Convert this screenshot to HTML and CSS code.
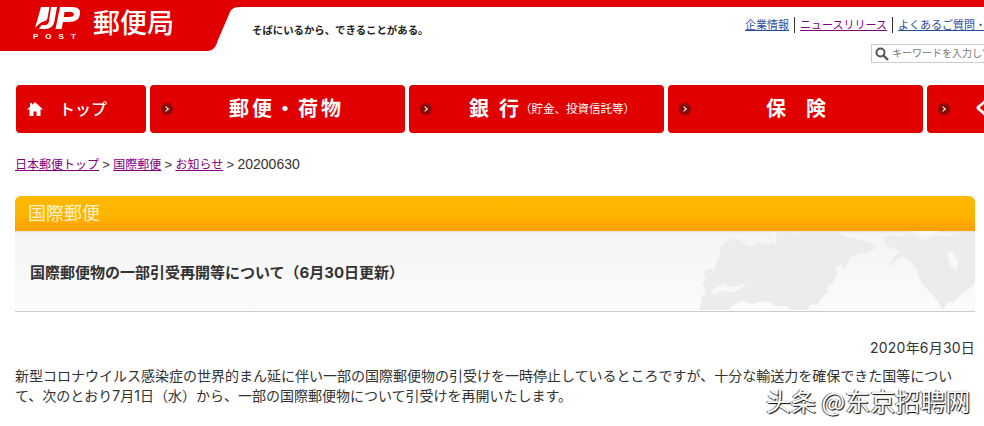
FILE: index.html
```html
<!DOCTYPE html>
<html lang="ja">
<head>
    <meta charset="UTF-8">
    <meta name="viewport" content="width=device-width, initial-scale=1.0">
    <title>国際郵便 お知らせ 20200630</title>
    <link rel="stylesheet" href="styles.css">
</head>
<body>
    <header class="header">
        <div class="brand">
            <div class="logo">
                <svg class="logo-mark" width="46" height="25" viewBox="0 0 46 25">
                    <path fill="#fff" d="M6 0H14.500L12.500 11Q12 14 8.500 14.500Q6 15 4 17L0 21Z"/>
                    <path fill="#fff" d="M16 0H22L19.500 14Q18 22 10 22H4L6.500 18H10Q13.500 18 14 14Z"/>
                    <path fill="#fff" fill-rule="evenodd" d="M25 0H37Q46 0 45 7Q44 15 34 15H28L26.500 22H20.500ZM29.500 5L28.800 10H34Q38.500 10 39 7.500Q39 5 35.500 5Z"/>
                </svg>
                <span class="logo-post">POST</span>
            </div>
            <span class="brand-name">郵便局</span>
        </div>
        <p class="tagline">そばにいるから、できることがある。</p>
        <div class="utility">
            <ul class="utility-links">
                <li><a href="#">企業情報</a></li>
                <li><a href="#" class="visited">ニュースリリース</a></li>
                <li><a href="#">よくあるご質問・お問い合わせ</a></li>
            </ul>
            <div class="search">
                <svg width="14" height="14" viewBox="0 0 14 14">
                    <circle cx="5.500" cy="5.500" r="4" fill="none" stroke="#555" stroke-width="2"/>
                    <path d="M8.500 8.500L13 13" stroke="#555" stroke-width="2.400"/>
                </svg>
                <span>キーワードを入力してください</span>
            </div>
        </div>
    </header>

    <nav class="nav">
        <a href="#" class="nav-item nav-home">
            <svg width="16" height="14" viewBox="0 0 16 14">
                <path fill="#fff" d="M8 0L16 7.500H13.500V14H9.500V9.500H6.500V14H2.500V7.500H0L3 4.700V1H5V2.800Z"/>
            </svg>
            <span class="nav-top">トップ</span>
        </a>
        <a href="#" class="nav-item nav-mail"><i class="bullet"></i><span class="label">郵便・荷物</span></a>
        <a href="#" class="nav-item nav-bank"><i class="bullet"></i><span class="label wide">銀行</span><small>（貯金、投資信託等）</small></a>
        <a href="#" class="nav-item nav-ins"><i class="bullet"></i><span class="label wide">保険</span></a>
        <a href="#" class="nav-item nav-life"><i class="bullet"></i><span class="label">くらし</span></a>
    </nav>

    <div class="breadcrumb">
        <a href="#">日本郵便トップ</a> &gt; <a href="#">国際郵便</a> &gt; <a href="#">お知らせ</a> &gt; <span class="current">20200630</span>
    </div>

    <main class="content">
        <h2 class="section-title">国際郵便</h2>
        <div class="title-panel">
            <svg class="world" width="276" height="80" viewBox="0 0 276 80">
                <path fill="#ececec" d="M0 79L3 66L7 60L3 52L7 47L4 41L11 37L15 40L18 29L22 24L20 18L26 11L34 8L41 9L46 13L51 16L60 12L66 14L74 11L76 2L84 1L100 4L110 1H134L148 6L161 9L170 11L178 16L172 20L168 22L160 22L151 27L148 33L146 39L141 34L136 36L138 42L134 52L128 56L130 60L124 66L118 74L112 73L108 79L92 79L86 74L78 76L72 72L62 70L54 73L44 70L34 74L30 79Z"/>
                <path fill="#ececec" d="M184 6L192 4L201 5L212 3L224 9L232 7L240 4L250 6L258 3L276 1V52L272 56L268 59L262 64L254 72L250 70L244 79L238 69L232 62L226 56L221 49L218 39L212 31L206 26L201 26L194 32L188 37L194 28L201 19L194 18L188 16Z"/>
                <path fill="#f8f8f8" d="M248 22L254 21L259 30L258 39L252 36L250 29Z"/>
                <path fill="#f8f8f8" d="M12 60L18 56L24 52L30 56L36 56L44 52L46 55L40 58L34 62L28 60L22 60L14 64Z"/>
                <path fill="#f8f8f8" d="M74 1H77L76.500 14H75Z"/>
                <path fill="#f8f8f8" d="M212 0H240L236 3L226 4Z"/>
                <path fill="#f8f8f8" d="M128 58L134 52L137 44L139 47L136 54L131 61Z"/>
            </svg>
            <h1 class="page-title">国際郵便物の一部引受再開等について（6月30日更新）</h1>
        </div>
        <p class="date">2020年6月30日</p>
        <p class="lead">新型コロナウイルス感染症の世界的まん延に伴い一部の国際郵便物の引受けを一時停止しているところですが、十分な輸送力を確保できた国等について、次のとおり7月1日（水）から、一部の国際郵便物について引受けを再開いたします。</p>
    </main>

    <div class="watermark">头条 @东京招聘网</div>
</body>
</html>
```

FILE: styles.css
```css
html, body {
    overflow: hidden;
}
body {
    margin: 0;
    height: 426px;
    position: relative;
    font-family: "Liberation Sans", "Noto Sans CJK JP", sans-serif;
    font-size: 14px;
    line-height: 20px;
    color: #333;
    background-color: #fff;
}
a {
    color: #800080;
}

/* header */
.header {
    display: flex;
    width: 1200px;
    height: 85px;
    border-top: 7px solid #e00000;
    box-sizing: border-box;
}
.brand {
    display: flex;
    align-items: flex-start;
    flex: none;
    width: 240px;
    height: 44px;
    padding-left: 35px;
    box-sizing: border-box;
    background-color: #e00000;
    clip-path: path("M0 0H240Q232 0 230 5L218 33Q215 44 208 44H0Z");
}
.logo {
    display: flex;
    flex-direction: column;
    width: 46px;
    margin-right: 13px;
}
.logo-mark {
    display: block;
}
.logo-post {
    margin-top: 1px;
    margin-left: -2px;
    color: #fff;
    font-size: 8px;
    font-weight: bold;
    line-height: 8px;
    letter-spacing: 7px;
    white-space: nowrap;
}
.brand-name {
    margin-left: -1px;
    color: #fff;
    font-size: 27px;
    font-weight: 500;
    line-height: 35px;
}
.tagline {
    margin: 16px 0 0 12px;
    flex: none;
    width: 493px;
    color: #222;
    font-size: 10.400px;
    font-weight: bold;
    line-height: 16px;
}
.utility {
    flex: none;
    width: 400px;
}
.utility-links {
    display: flex;
    margin: 10px 0 0;
    padding: 0;
    list-style: none;
    font-size: 11px;
    line-height: 16px;
}
.utility-links li {
    padding: 0 5px;
    border-left: 1px solid #333;
}
.utility-links li:first-child {
    padding-left: 0;
    border-left: none;
}
.utility-links a {
    color: #2a4f9e;
}
.utility-links a.visited {
    color: #800080;
}
.search {
    display: flex;
    align-items: center;
    gap: 3px;
    width: 300px;
    height: 19px;
    margin: 11px 0 0 126px;
    padding-left: 3px;
    border: 1px solid #ccc;
    box-sizing: border-box;
    color: #777;
    font-size: 10px;
}

/* main nav */
.nav {
    display: flex;
    gap: 4px;
    width: 1200px;
    padding-left: 16px;
}
.nav-item {
    display: flex;
    align-items: center;
    flex: none;
    box-sizing: border-box;
    width: 255px;
    height: 48px;
    padding-left: 11px;
    border-radius: 4px;
    background-color: #e00000;
    color: #fff;
    text-decoration: none;
}
.nav-home {
    width: 130px;
}
.nav-top {
    margin-left: 16px;
    margin-top: 2px;
    font-size: 16px;
    font-weight: 500;
}
.bullet {
    position: relative;
    flex: none;
    width: 12px;
    height: 12px;
    border-radius: 50%;
    background-color: #8a0a0a;
}
.bullet::after {
    content: "";
    position: absolute;
    left: 3px;
    top: 4px;
    width: 3px;
    height: 3px;
    border-top: 1px solid #fff;
    border-right: 1px solid #fff;
    transform: rotate(45deg);
}
.label {
    font-size: 20px;
    font-weight: bold;
    letter-spacing: 3px;
    white-space: nowrap;
}
.label.wide {
    letter-spacing: 10px;
}
.nav-item small {
    font-size: 11.500px;
    white-space: nowrap;
}
.nav-mail .label { margin-left: 56px; }
.nav-bank .label { margin-left: 37px; margin-right: -9px; }
.nav-ins .label { margin-left: 75px; letter-spacing: 20px; }
.nav-life .label { margin-left: 23px; }

/* breadcrumb */
.breadcrumb {
    margin: 21px 0 0 15px;
    font-size: 13px;
    word-spacing: -0.300px;
}
.breadcrumb a {
    font-size: 12px;
}
.breadcrumb .current {
    font-size: 14px;
}

/* content */
.content {
    width: 960px;
    margin: 21px 0 0 15px;
}
.section-title {
    margin: 0;
    height: 35px;
    padding-left: 13px;
    border-radius: 6px 6px 0 0;
    background: linear-gradient(#ffb900, #ffb400 55%, #ff9f00);
    color: #fff2d0;
    font-size: 18px;
    font-weight: normal;
    line-height: 37px;
}
.title-panel {
    position: relative;
    height: 80px;
    border-bottom: 1px solid #ccc;
    background: linear-gradient(#f4f4f4, #fbfbfb);
    box-shadow: inset 0 2px 2px -1px #ddd;
}
.world {
    position: absolute;
    right: 0;
    top: 0;
}
.page-title {
    position: relative;
    margin: 0;
    padding-left: 15px;
    font-family: Inter, "Noto Sans CJK JP", sans-serif;
    font-size: 15px;
    font-weight: bold;
    line-height: 80px;
    padding-top: 2px;
    height: 78px;
    box-sizing: border-box;
}
.date {
    margin: 26px 0 0;
    font-family: Inter, "Noto Sans CJK JP", sans-serif;
    letter-spacing: 0.200px;
    text-align: right;
}
.lead {
    margin: 8px 0 0;
    font-family: Inter, "Noto Sans CJK JP", sans-serif;
    line-height: 19.600px;
}

/* image credit laid over the page */
.watermark {
    position: absolute;
    left: 766px;
    top: 385px;
    color: #fff;
    font-family: "Noto Sans CJK SC", sans-serif;
    font-size: 25px;
    line-height: 30px;
    white-space: nowrap;
    text-shadow: 1px 1px 1px #000, -1px 0 1px #555;
}
```
